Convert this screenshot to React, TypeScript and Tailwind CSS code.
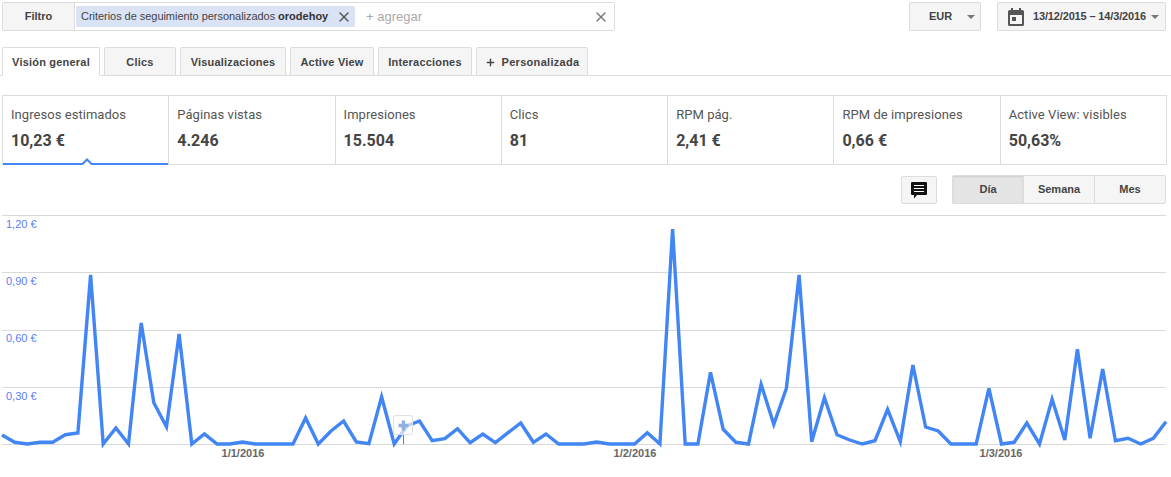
import { Plus, X } from "lucide-react";

const tabs = [
  { label: "Visión general", w: "w-[98px]", active: true },
  { label: "Clics", w: "w-[72px]" },
  { label: "Visualizaciones", w: "w-[106px]" },
  { label: "Active View", w: "w-[84px]" },
  { label: "Interacciones", w: "w-[94px]" },
];

const metrics = [
  { label: "Ingresos estimados", value: "10,23 €", active: true },
  { label: "Páginas vistas", value: "4.246" },
  { label: "Impresiones", value: "15.504" },
  { label: "Clics", value: "81" },
  { label: "RPM pág.", value: "2,41 €" },
  { label: "RPM de impresiones", value: "0,66 €" },
  { label: "Active View: visibles", value: "50,63%" },
];

// y pixel per day, read off the chart
const series = [
  435, 442.3, 444, 442.3, 442.3, 434.7, 433, 275, 444, 428, 444, 323, 402.7, 426.7, 334, 444, 434, 444, 444, 442,
  444, 444, 444, 444, 418, 444, 431, 421, 442, 443.7, 396.7, 444, 426, 421, 440.7, 438.7, 428.7, 442.7, 434, 442.7,
  432.7, 423, 442.3, 434, 444, 444, 444, 442, 444, 444, 444, 432.7, 444, 229, 444, 444, 372.3, 429.3, 442.3, 444,
  384.3, 424.3, 388.3, 275, 441.7, 397.7, 434.7, 440, 444, 440.7, 409.3, 441.7, 365, 427, 431, 444, 444, 444, 388.3,
  444, 442.3, 423, 444, 399.3, 440, 349.3, 438.3, 369, 440.7, 438.3, 444, 438.3, 421.7,
];

const points = series.map((y, i) => `${(2 + i * 12.652).toFixed(1)},${y - 215}`).join(" ");

function Caret() {
  return <span className="h-0 w-0 border-x-[4px] border-t-[4px] border-x-transparent border-t-[#777]" />;
}

function Chart() {
  return (
    <svg width="1171" height="262" viewBox="0 0 1171 262" className="block">
      {[0.5, 57.5, 115.5, 172.5, 229.5].map((y) => (
        <line key={y} x1="2" x2="1166" y1={y} y2={y} stroke="#d9d9d9" strokeWidth="1" />
      ))}
      <g fontFamily="Arial, 'Liberation Sans', sans-serif" fontSize="11" fill="#5c7cf6">
        <text x="6" y="13">1,20 €</text>
        <text x="6" y="70">0,90 €</text>
        <text x="6" y="127">0,60 €</text>
        <text x="6" y="185">0,30 €</text>
      </g>
      <g fontFamily="Arial, 'Liberation Sans', sans-serif" fontSize="11" fontWeight="700" fill="#666" textAnchor="middle">
        <text x="243" y="242">1/1/2016</text>
        <text x="635" y="242">1/2/2016</text>
        <text x="1001" y="242">1/3/2016</text>
      </g>
      <polyline points={points} fill="none" stroke="#4285f4" strokeWidth="3.4" strokeLinejoin="miter" strokeMiterlimit="4" />
      <line x1="403.5" x2="403.5" y1="220" y2="229" stroke="#777" />
      <rect x="393.5" y="200.5" width="19" height="19" rx="2" fill="#fff" fillOpacity="0.65" stroke="#e0e0e0" />
      <path d="M403.500 205.500v10M398.500 210.500h10" stroke="#8fb0dc" strokeWidth="3.500" />
    </svg>
  );
}

export default function App() {
  return (
    <div className="w-[1171px] h-[477px] overflow-hidden bg-white text-[#333] font-['Liberation_Sans',Arial,sans-serif]">
      <div className="flex items-start justify-between pt-[2px] pl-[2px] pr-[5px]">
        <div className="flex h-[29px] w-[613px] items-center rounded-[2px] border border-[#dcdcdc]">
          <div className="flex h-full w-[72px] items-center justify-center border-r border-[#dcdcdc] bg-[#f5f5f5] text-[11px] font-bold text-[#444]">
            Filtro
          </div>
          <div className="ml-[1px] flex h-[21px] w-[279px] items-center rounded-[2px] bg-[#d9e3f5] pl-[5px] text-[11px] text-[#444]">
            <span className="whitespace-nowrap tracking-[-0.04px]">Criterios de seguimiento personalizados</span>
            <span className="ml-[3px] font-bold text-[#333]">orodehoy</span>
            <X className="ml-[8px] text-[#555]" size={16} strokeWidth={2} />
          </div>
          <span className="ml-[11px] text-[13px] text-[#aaa]">+ agregar</span>
          <X className="ml-auto mr-[5px] text-[#777]" size={16} strokeWidth={2} />
        </div>
        <div className="flex gap-[16px]">
          <div className="flex h-[29px] w-[72px] items-center rounded-[2px] border border-[#dcdcdc] bg-[#f5f5f5] pl-[19px] text-[11px] font-bold text-[#444]">
            EUR
            <span className="ml-[15px] flex"><Caret /></span>
          </div>
          <div className="flex h-[29px] w-[169px] items-center rounded-[2px] border border-[#dcdcdc] bg-[#f5f5f5] pl-[10px] text-[11px] font-bold text-[#444]">
            <svg width="16" height="18" viewBox="0 0 16 18" className="shrink-0">
              <path d="M3 0h2v2h6V0h2v2h1.500A1.500 1.500 0 0 1 16 3.500V16.500A1.500 1.500 0 0 1 14.500 18H1.500A1.500 1.500 0 0 1 0 16.500V3.500A1.500 1.500 0 0 1 1.500 2H3Z" fill="#555" />
              <rect x="2" y="7" width="12" height="9" fill="#f5f5f5" />
              <rect x="4" y="9" width="4" height="4" fill="#555" />
            </svg>
            <span className="ml-[9px] whitespace-nowrap tracking-[-0.15px]">13/12/2015 – 14/3/2016</span>
            <span className="ml-[5px] flex"><Caret /></span>
          </div>
        </div>
      </div>

      <div className="mt-[16px] flex h-[29px] items-end gap-[4px] border-b border-[#dcdcdc] pl-[2px]">
        {tabs.map((t) => (
          <div
            key={t.label}
            className={`-mb-px flex h-[29px] ${t.w} items-center justify-center rounded-t-[2px] border border-[#dcdcdc] pt-[1px] text-[11px] font-bold tracking-[0.2px] text-[#444] ${
              t.active ? "border-b-white bg-white" : "bg-[#f5f5f5]"
            }`}
          >
            {t.label}
          </div>
        ))}
        <div className="-mb-px flex h-[29px] w-[112px] items-center justify-center gap-[6px] rounded-t-[2px] border border-[#dcdcdc] bg-[#f5f5f5] pt-[1px] text-[11px] font-bold tracking-[0.3px] text-[#444]">
          <Plus size={11} strokeWidth={3} />
          Personalizada
        </div>
      </div>

      <div className="ml-[2px] mt-[19px] grid h-[70px] w-[1165px] grid-cols-7 border-y border-r border-[#dcdcdc]">
        {metrics.map((m) => (
          <div key={m.label} className="relative border-l border-[#dcdcdc] pl-[8px] pt-[10px] font-['Roboto',sans-serif]">
            <div className="text-[13px] leading-[18px] tracking-[0.05px] text-[#555]">{m.label}</div>
            <div className="mt-[7px] text-[16px] font-bold leading-[20px] text-[#444]">{m.value}</div>
            {m.active && (
              <>
                <div className="absolute -bottom-px left-0 right-0 h-[2px] bg-[#4285f4]" />
                <svg width="10" height="7" viewBox="0 0 10 7" className="absolute -bottom-px left-[79px] bg-white">
                  <path d="M0 6.500 5 1.500l5 5" fill="none" stroke="#4285f4" strokeWidth="2" />
                </svg>
              </>
            )}
          </div>
        ))}
      </div>

      <div className="mt-[10px] flex h-[30px] items-start justify-end pr-[5px]">
        <div className="mt-[1px] flex h-[28px] w-[36px] items-center justify-center rounded-[2px] border border-[#dcdcdc] bg-[#f5f5f5]">
          <svg width="16" height="17" viewBox="0 0 16 17">
            <path d="M1 0h14a1 1 0 0 1 1 1v11a1 1 0 0 1-1 1H6l-3 3.500V13H1a1 1 0 0 1-1-1V1a1 1 0 0 1 1-1Z" fill="#111" />
            <path d="M3 3.500h10M3 6.500h10M3 9.500h10" stroke="#fff" strokeWidth="1" />
          </svg>
        </div>
        <div className="ml-[15px] flex h-[29px] w-[214px] rounded-[2px] border border-[#dcdcdc] bg-[#f5f5f5] text-[11px] font-bold text-[#444]">
          <div className="flex w-[71px] items-center justify-center border-r border-[#dcdcdc] bg-[#e4e4e4] shadow-[inset_0_1px_2px_rgba(0,0,0,0.1)]">Día</div>
          <div className="flex w-[71px] items-center justify-center border-r border-[#dcdcdc]">Semana</div>
          <div className="flex flex-1 items-center justify-center">Mes</div>
        </div>
      </div>

      <div className="mt-[10px]">
        <Chart />
      </div>
    </div>
  );
}
